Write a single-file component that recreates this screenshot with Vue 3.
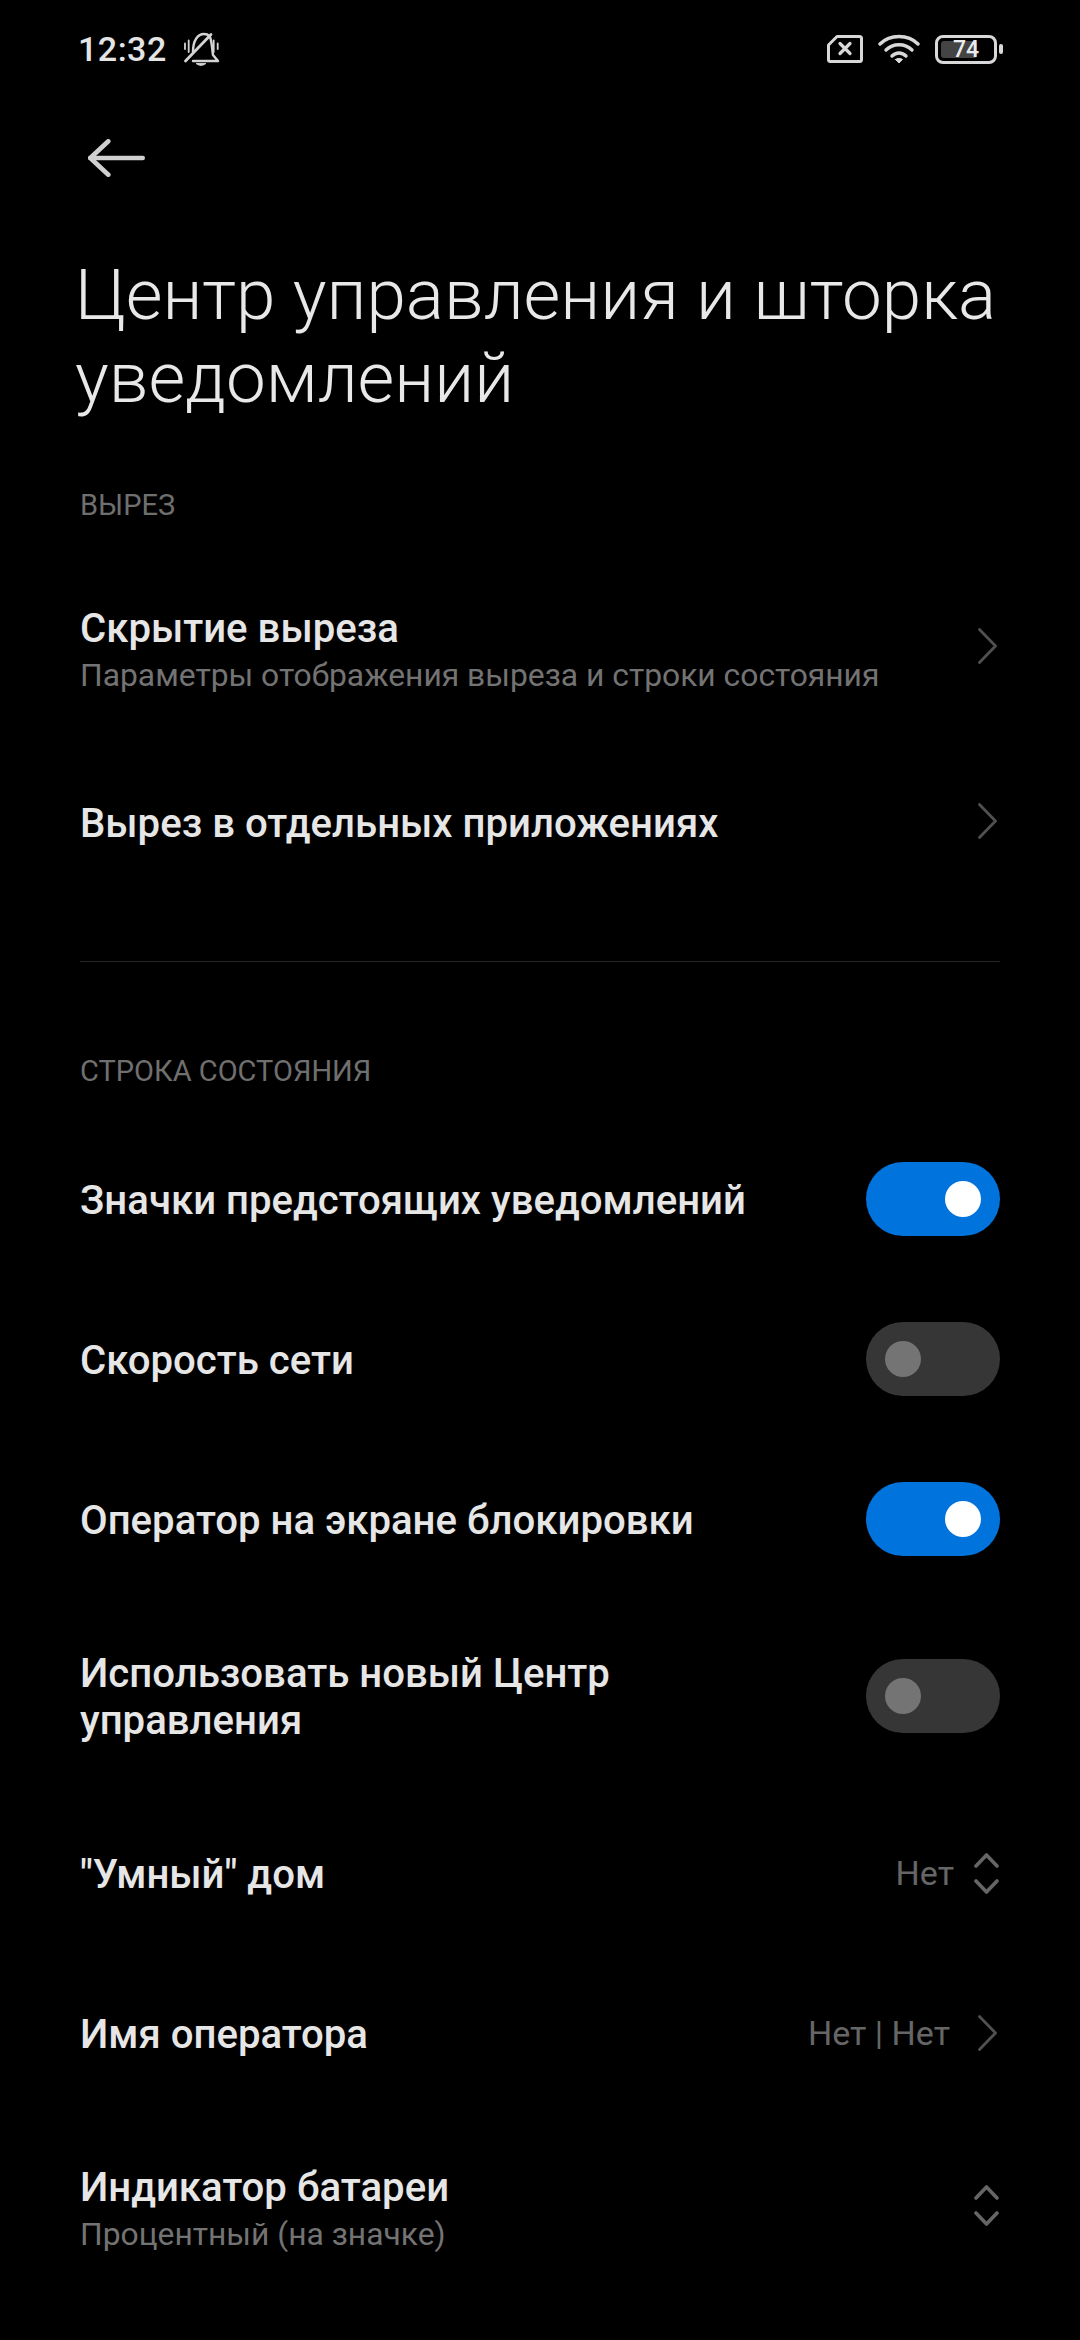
<script setup>
</script>

<template>
  <div class="screen">
    <div class="status">
      <div class="status-left">
        <span class="time">12:32</span>
        <svg class="bell" width="50" height="45" viewBox="0 0 50 45" fill="none" stroke="#d4d4d4" stroke-width="2.400" stroke-linecap="round" stroke-linejoin="round">
          <path d="M17 27 C17 15 22 9 28 9 C30.500 9 32 9.500 33.500 11 C36 15 36 25 37 30 L42 36 H17" />
          <path d="M20.500 38.800 Q25 42 29.500 38.800 Z" fill="#d4d4d4" stroke-width="1" />
          <path d="M9.500 36 L35 9.500" stroke-width="2.800" />
          <path d="M9 18.500 V24 M12.700 15.500 V27 M37.700 15.500 V27 M41.700 18.500 V24" stroke-width="1.800" />
        </svg>
      </div>
      <div class="status-right">
        <svg width="36" height="28" viewBox="0 0 36 28" fill="none" stroke="#d8d8d8" stroke-linejoin="round" stroke-linecap="round">
          <path d="M10 1.500 H32.500 Q34.500 1.500 34.500 3.500 V24.500 Q34.500 26.500 32.500 26.500 H3.500 Q1.500 26.500 1.500 24.500 V10 Z" stroke-width="3" />
          <path d="M13 8.500 L23 18.500 M23 8.500 L13 18.500" stroke-width="3.200" />
        </svg>
        <svg class="wifi" width="42" height="30" viewBox="0 0 42 30" fill="none" stroke="#d8d8d8" stroke-width="3.400" stroke-linecap="round">
          <path d="M2 10 C12 0 30 0 40 10" />
          <path d="M8 16 C15 9 27 9 34 16" />
          <path d="M14 22 C18 18 24 18 28 22" />
          <path d="M17.500 25.500 L21 29 L24.500 25.500 C22.500 24 19.500 24 17.500 25.500 Z" fill="#d8d8d8" stroke-width="1" stroke-linejoin="round" />
        </svg>
        <div class="battery">
          <div class="battery-body">
            <div class="battery-fill"></div>
            <span class="battery-text">74</span>
          </div>
          <div class="battery-tip"></div>
        </div>
      </div>
    </div>

    <div class="back">
      <svg width="57" height="38" viewBox="0 0 57 38" fill="none" stroke="#d0d0d0" stroke-width="4.600" stroke-linecap="round" stroke-linejoin="round">
        <path d="M2.300 19 H54.700" />
        <path d="M20.300 2.300 L2.300 19 L20.300 35.700" />
      </svg>
    </div>

    <h1 class="title">Центр управления и шторка уведомлений</h1>

    <div class="section first">ВЫРЕЗ</div>

    <div class="row two-line">
      <div class="text">
        <div class="label">Скрытие выреза</div>
        <div class="sub">Параметры отображения выреза и строки состояния</div>
      </div>
      <svg class="chev raised" width="19" height="36" viewBox="0 0 19 36" fill="none" stroke="#505050" stroke-width="2.800" stroke-linecap="round" stroke-linejoin="round">
        <path d="M1.500 1.500 L17.500 18 L1.500 34.500" />
      </svg>
    </div>

    <div class="row">
      <div class="label">Вырез в отдельных приложениях</div>
      <svg class="chev raised" width="19" height="36" viewBox="0 0 19 36" fill="none" stroke="#505050" stroke-width="2.800" stroke-linecap="round" stroke-linejoin="round">
        <path d="M1.500 1.500 L17.500 18 L1.500 34.500" />
      </svg>
    </div>

    <div class="divider"></div>

    <div class="section second">СТРОКА СОСТОЯНИЯ</div>

    <div class="row">
      <div class="label">Значки предстоящих уведомлений</div>
      <div class="toggle on"><div class="knob"></div></div>
    </div>
    <div class="row">
      <div class="label">Скорость сети</div>
      <div class="toggle"><div class="knob"></div></div>
    </div>
    <div class="row">
      <div class="label">Оператор на экране блокировки</div>
      <div class="toggle on"><div class="knob"></div></div>
    </div>
    <div class="row tall">
      <div class="label narrow">Использовать новый Центр управления</div>
      <div class="toggle"><div class="knob"></div></div>
    </div>
    <div class="row">
      <div class="label">"Умный" дом</div>
      <div class="right select">
        <span class="value">Нет</span>
        <svg class="updown" width="25" height="41" viewBox="0 0 25 41" fill="none" stroke="#666" stroke-width="3.600" stroke-linecap="round" stroke-linejoin="round">
          <path d="M2 13 L12.500 2 L23 13" /><path d="M2 28 L12.500 39 L23 28" />
        </svg>
      </div>
    </div>
    <div class="row">
      <div class="label">Имя оператора</div>
      <div class="right link">
        <span class="value">Нет | Нет</span>
        <svg class="chev" width="19" height="36" viewBox="0 0 19 36" fill="none" stroke="#505050" stroke-width="2.800" stroke-linecap="round" stroke-linejoin="round">
          <path d="M1.500 1.500 L17.500 18 L1.500 34.500" />
        </svg>
      </div>
    </div>
    <div class="row two-line last">
      <div class="text">
        <div class="label">Индикатор батареи</div>
        <div class="sub">Процентный (на значке)</div>
      </div>
      <svg class="updown" width="25" height="41" viewBox="0 0 25 41" fill="none" stroke="#666" stroke-width="3.600" stroke-linecap="round" stroke-linejoin="round">
        <path d="M2 13 L12.500 2 L23 13" /><path d="M2 28 L12.500 39 L23 28" />
      </svg>
    </div>
  </div>
</template>

<style>
html, body { background: #000; margin: 0; }
</style>

<style scoped>
.screen {
  width: 1080px;
  height: 2340px;
  overflow: hidden;
  background: #000;
  font-family: Roboto, "Noto Sans", sans-serif;
  color: #e6e6e6;
  box-sizing: border-box;
}
.status {
  height: 98px;
  padding: 0 77px 0 78px;
  display: flex;
  align-items: center;
  justify-content: space-between;
}
.status-left { display: flex; align-items: center; gap: 9px; }
.bell { margin-top: -3px; }
.time { font-size: 34px; font-weight: 500; color: #e4e4e4; letter-spacing: 0.5px; }
.status-right { display: flex; align-items: center; gap: 15px; }
.battery { display: flex; align-items: center; gap: 2px; }
.battery-body {
  width: 62px; height: 29px; box-sizing: border-box;
  border: 3px solid #d8d8d8; border-radius: 8px;
  position: relative;
}
.battery-fill {
  position: absolute; left: 3px; top: 3px; bottom: 3px; width: 36px;
  background: #444; border-radius: 3px;
}
.battery-text {
  position: absolute; left: 15px; top: -3px; width: 25px; text-align: center;
  font-size: 23px; line-height: 30px; font-weight: 500; color: #ececec;
}
.battery-tip { width: 4px; height: 10px; background: #d8d8d8; border-radius: 2px; }
.back { padding: 41px 0 0 88px; height: 76px; }
.title {
  margin: 0;
  padding: 38px 40px 0 75px;
  font-size: 71px;
  line-height: 83px;
  font-weight: 300;
  color: #e8e8e8;
}
.section { padding-left: 80px; font-size: 29px; line-height: 36px; color: #6f6f6f; }
.section.first { margin-top: 68px; margin-bottom: 35px; }
.section.second { margin-top: 91px; margin-bottom: 30px; }
.row {
  height: 160px;
  padding: 0 80px;
  display: flex;
  align-items: center;
  justify-content: space-between;
}
.row.two-line { height: 184px; }
.row.tall { height: 194px; }
.label { font-size: 40.150px; line-height: 47px; font-weight: 500; color: #e6e6e6; padding-top: 2px; }
.label.narrow { width: 600px; }
.sub { font-size: 31.800px; line-height: 47px; color: #737373; }
.two-line .text { margin-top: 2px; }
.chev { margin-right: 3px; flex: none; }
.chev.raised { margin-bottom: 2px; }
.two-line .chev.raised { margin-bottom: 8px; }
.updown { margin-right: 1px; flex: none; }
.last .text { margin-top: 0; padding-top: 10px; }
.right { display: flex; align-items: center; }
.right.select { gap: 20px; }
.right.link { gap: 28px; }
.value { font-size: 34px; color: #666; }
.divider { height: 1px; margin: 59px 80px 0; background: #262626; }
.toggle {
  width: 134px; height: 74px; border-radius: 37px;
  background: #363636;
  position: relative;
  flex: none;
}
.toggle.on { background: #0073dd; }
.knob {
  position: absolute; top: 19px; left: 19px;
  width: 36px; height: 36px; border-radius: 50%;
  background: #747474;
}
.toggle.on .knob { left: 79px; background: #fff; }
</style>
